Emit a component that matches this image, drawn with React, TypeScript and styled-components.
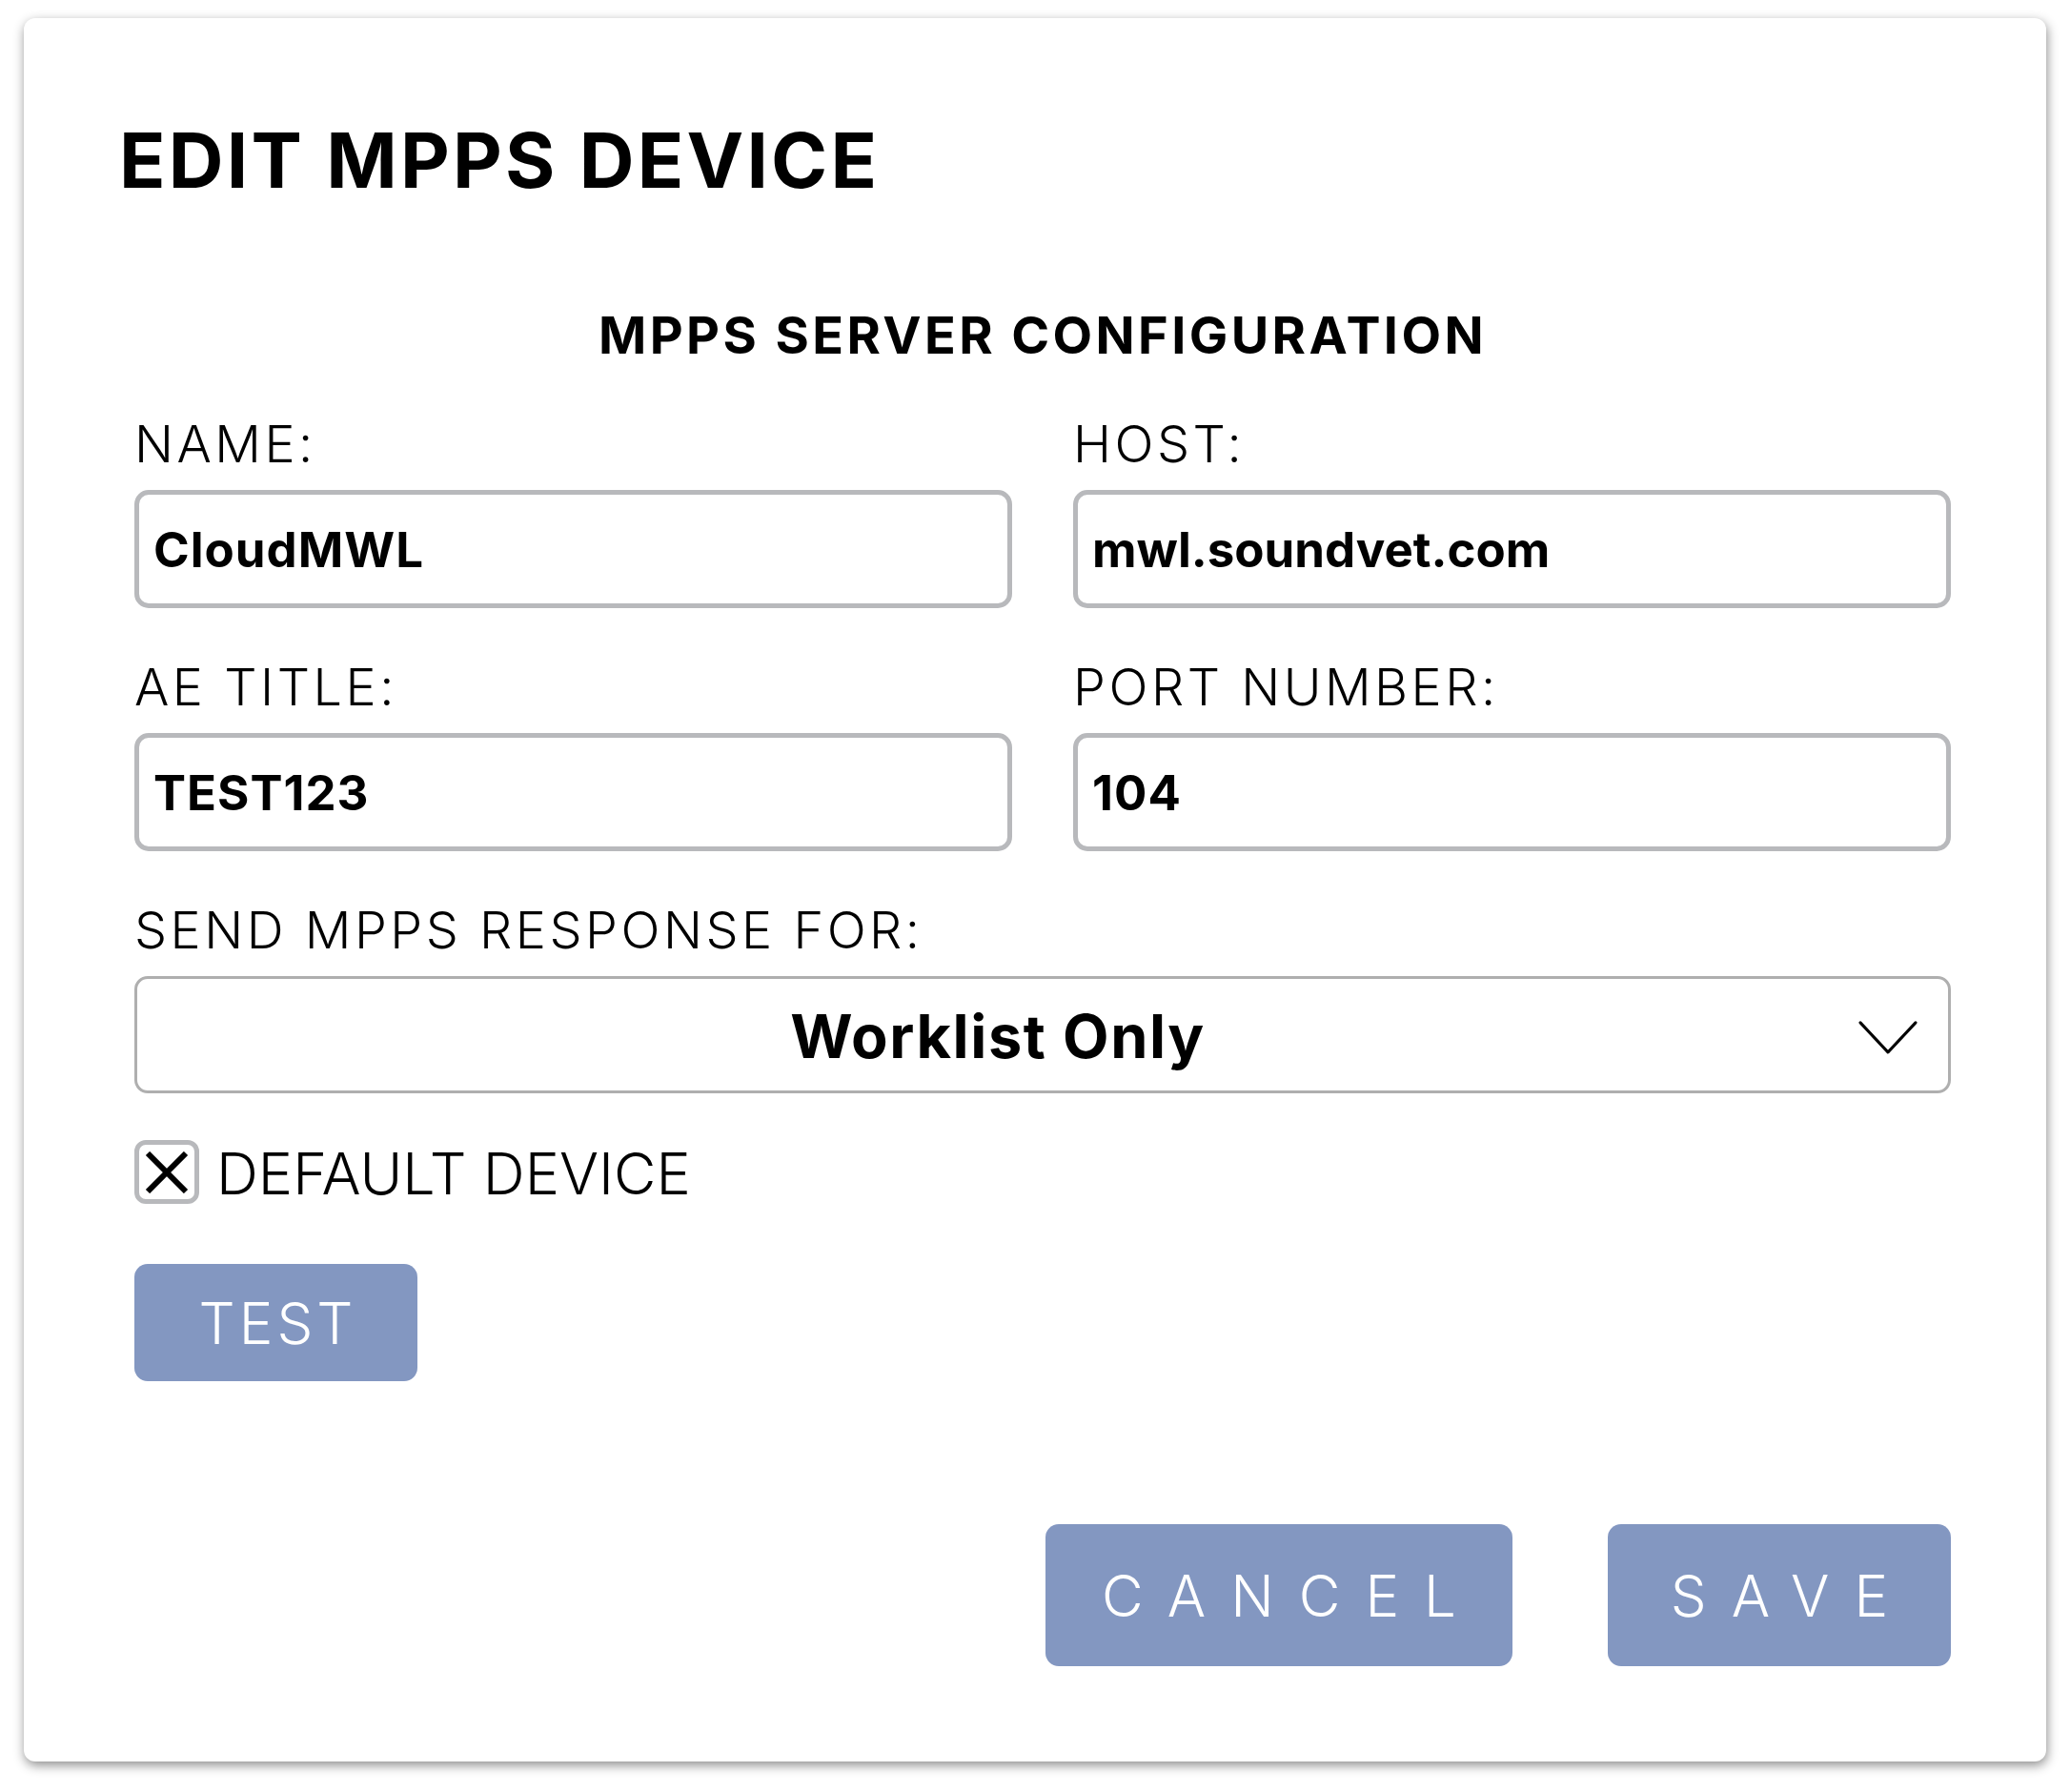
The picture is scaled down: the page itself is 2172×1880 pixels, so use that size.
import React from 'react';
import styled, { createGlobalStyle } from 'styled-components';

const Global = createGlobalStyle`
  html, body { margin: 0; padding: 0; background: #ffffff; }
  body { font-family: Inter, "Noto Sans", sans-serif; color: #000; }
  *, *::before, *::after { box-sizing: border-box; }
`;

const Page = styled.div`
  padding: 19px 25px;
`;

const Card = styled.div`
  width: 2122px;
  height: 1829px;
  background: #fff;
  border-radius: 12px;
  box-shadow: 1px 4px 12px rgba(0, 0, 0, 0.45);
  padding: 109px 100px 100px 116px;
  display: flex;
  flex-direction: column;
`;

const Title = styled.h1`
  margin: 0 0 0 -16px;
  font-size: 80px;
  line-height: 80px;
  font-weight: 700;
  letter-spacing: 3.2px;
`;

const SectionTitle = styled.h2`
  margin: 117px 0 0;
  text-align: center;
  font-size: 54px;
  line-height: 54px;
  font-weight: 700;
  letter-spacing: 3.4px;
`;

const Grid = styled.div`
  display: grid;
  grid-template-columns: 1fr 1fr;
  column-gap: 64px;
  row-gap: 56px;
  margin-top: 60px;
`;

const Field = styled.div`
  display: flex;
  flex-direction: column;
  gap: 21px;
`;

const Label = styled.label`
  font-size: 54px;
  line-height: 54px;
  font-weight: 300;
  letter-spacing: 3.5px;
  color: #000;
`;

const TextInput = styled.input<{ $spacing?: number }>`
  height: 124px;
  width: 100%;
  border: 5px solid #b8b9bc;
  border-radius: 15px;
  padding: 0 15px;
  font-family: Inter, "Noto Sans", sans-serif;
  font-size: 51px;
  font-weight: 700;
  letter-spacing: ${(p) => p.$spacing ?? 1}px;
  color: #000;
  background: #fff;
  outline: none;
`;

const FullField = styled(Field)`
  margin-top: 56px;
`;

const SelectBox = styled.div`
  height: 123px;
  border: 3px solid #afafaf;
  border-radius: 14px;
  display: flex;
  align-items: center;
  justify-content: center;
  position: relative;
  padding-right: 94px;
  padding-top: 2px;
  font-size: 63px;
  font-weight: 700;
  letter-spacing: 1.6px;
`;

const Chevron = styled.svg`
  position: absolute;
  right: 32px;
  top: 50%;
  transform: translateY(-42%);
`;

const CheckRow = styled.div`
  display: flex;
  align-items: center;
  gap: 18px;
  margin-top: 49px;
`;

const CheckBox = styled.span`
  width: 68px;
  height: 67px;
  flex: none;
  border: 5px solid #b8b9bc;
  border-radius: 12px;
  display: flex;
  align-items: center;
  justify-content: center;
`;

const CheckLabel = styled.span`
  font-size: 61px;
  line-height: 61px;
  font-weight: 300;
  letter-spacing: 0px;
  padding-top: 3px;
`;

const Button = styled.button<{ $w: number; $h: number; $spacing?: number; $pad?: number }>`
  width: ${(p) => p.$w}px;
  height: ${(p) => p.$h}px;
  background: #8397c1;
  border: none;
  border-radius: 14px;
  color: #fff;
  font-family: Inter, "Noto Sans", sans-serif;
  font-weight: 300;
  font-size: 60px;
  letter-spacing: ${(p) => p.$spacing ?? 2}px;
  padding: 0 0 0 ${(p) => p.$pad ?? 0}px;
  display: flex;
  align-items: center;
  justify-content: center;
  cursor: pointer;
`;

const TestRow = styled.div`
  margin-top: 63px;
`;

const Footer = styled.div`
  margin-top: auto;
  display: flex;
  justify-content: flex-end;
  gap: 100px;
`;

export default function App() {
  return (
    <>
      <Global />
      <Page>
        <Card>
          <Title>EDIT MPPS DEVICE</Title>
          <SectionTitle>MPPS SERVER CONFIGURATION</SectionTitle>
          <Grid>
            <Field>
              <Label>NAME:</Label>
              <TextInput readOnly value="CloudMWL" />
            </Field>
            <Field>
              <Label>HOST:</Label>
              <TextInput readOnly value="mwl.soundvet.com" $spacing={0} />
            </Field>
            <Field>
              <Label>AE TITLE:</Label>
              <TextInput readOnly value="TEST123" />
            </Field>
            <Field>
              <Label>PORT NUMBER:</Label>
              <TextInput readOnly value="104" />
            </Field>
          </Grid>
          <FullField>
            <Label>SEND MPPS RESPONSE FOR:</Label>
            <SelectBox>
              Worklist Only
              <Chevron width="62" height="36" viewBox="0 0 62 36">
                <polyline points="2,2 31,33 60,2" fill="none" stroke="#000" strokeWidth="3" strokeLinecap="round" strokeLinejoin="round" />
              </Chevron>
            </SelectBox>
          </FullField>
          <CheckRow>
            <CheckBox>
              <svg width="46" height="44" viewBox="0 0 46 44">
                <path d="M3 2 L43 42 M43 2 L3 42" stroke="#000" strokeWidth="6" strokeLinecap="butt" />
              </svg>
            </CheckBox>
            <CheckLabel>DEFAULT DEVICE</CheckLabel>
          </CheckRow>
          <TestRow>
            <Button $w={297} $h={123} $spacing={4} $pad={4}>TEST</Button>
          </TestRow>
          <Footer>
            <Button $w={490} $h={149} $spacing={26} $pad={26}>CANCEL</Button>
            <Button $w={360} $h={149} $spacing={26} $pad={26}>SAVE</Button>
          </Footer>
        </Card>
      </Page>
    </>
  );
}
